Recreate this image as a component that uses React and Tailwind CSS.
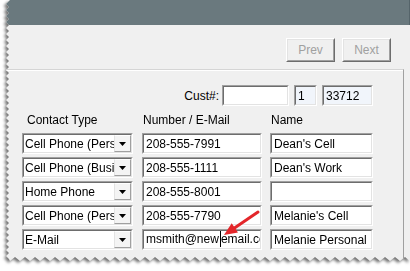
import React from "react";

function Inset({ w, bg = "bg-white", children }) {
  return (
    <div className={`${w} h-[21px] border border-t-[#a0a0a0] border-l-[#a0a0a0] border-b-white border-r-white`}>
      <div className={`h-full border border-t-[#6d6d6d] border-l-[#6d6d6d] border-b-[#e3e3e3] border-r-[#e3e3e3] ${bg} flex items-center overflow-hidden whitespace-nowrap`}>
        {children}
      </div>
    </div>
  );
}

function Combo({ text }) {
  return (
    <Inset w="w-[111px]">
      <div className="flex-1 pl-[1px] overflow-hidden whitespace-nowrap text-black">{text}</div>
      <div className="w-[17px] h-full shrink-0 border border-t-white border-l-[#e3e3e3] border-b-[#a0a0a0] border-r-[#a0a0a0] bg-[#f4f4f4] flex items-center justify-center">
        <svg width="7" height="4" viewBox="0 0 7 4">
          <polygon points="0,0 7,0 3.5,4" fill="#000" />
        </svg>
      </div>
    </Inset>
  );
}

function Field({ w, children, bg }) {
  return (
    <Inset w={w} bg={bg}>
      <div className="pl-[2px] text-black whitespace-nowrap">{children}</div>
    </Inset>
  );
}

function Btn({ label }) {
  return (
    <div className="w-[49px] h-[24px] border border-t-white border-l-white border-b-[#6d6d6d] border-r-[#6d6d6d]">
      <div className="h-full border border-t-[#e3e3e3] border-l-[#e3e3e3] border-b-[#a0a0a0] border-r-[#a0a0a0] flex items-center justify-center text-[#a0a0a0]">
        {label}
      </div>
    </div>
  );
}

const rows = [
  { type: "Cell Phone (Personal)", num: "208-555-7991", name: "Dean's Cell" },
  { type: "Cell Phone (Business)", num: "208-555-1111", name: "Dean's Work" },
  { type: "Home Phone", num: "208-555-8001", name: "" },
  { type: "Cell Phone (Personal)", num: "208-555-7790", name: "Melanie's Cell" },
  { type: "E-Mail", num: null, name: "Melanie Personal" },
];

export default function App() {
  const pts = ["10px 0px", "410px 0px", "410px 260px"];
  for (let x = 410, i = 0; x >= 8; x -= 5, i++) pts.push(`${x}px ${i % 2 ? 257 : 261}px`);
  for (let y = 259, i = 0; y >= 0; y -= 3, i++) pts.push(`${i % 2 ? 6 : 9}px ${y}px`);
  const clip = `polygon(${pts.join(",")})`;

  return (
    <div className="w-[410px] h-[271px] bg-white relative overflow-hidden font-['Liberation_Sans',Arial,sans-serif] text-[12px] leading-[14px]">
      <div className="drop-shadow-[-2px_2px_1.5px_rgba(0,0,0,0.55)]">
        <div className="h-[264px] bg-[#f0f0f0] flex flex-col" style={{ clipPath: clip }}>
          <div className="h-[25px] bg-[#6a797e] border-r border-[#55646a]" />
          <div className="flex justify-end gap-[7px] pt-[13px] pr-[19px]">
            <Btn label="Prev" />
            <Btn label="Next" />
          </div>
          <div className="flex-1 mt-[7px] mr-[6px] border-t border-r border-t-[#d5d5d5] border-r-[#a0a0a0] shadow-[inset_0_1px_0_#ffffff]">
            <div className="flex items-center h-[21px] mt-[15px] pl-[22px]">
              <div className="w-[200px] text-right pr-[3px] text-black">Cust#:</div>
              <Field w="w-[67px]" />
              <div className="ml-[5px]">
                <Field w="w-[23px]" bg="bg-[#f1f5fb]">1</Field>
              </div>
              <div className="ml-[5px]">
                <Field w="w-[51px]" bg="bg-[#f1f5fb]">33712</Field>
              </div>
            </div>
            <div className="flex mt-[7px] h-[15px] pl-[22px] text-black">
              <div className="w-[120px] pl-[5px]">Contact Type</div>
              <div className="w-[128px] pl-[1px]">Number / E-Mail</div>
              <div className="pl-[1px]">Name</div>
            </div>
            <div className="flex flex-col gap-[3px] mt-[5px] pl-[22px]">
              {rows.map((r, i) => (
                <div key={i} className="flex">
                  <Combo text={r.type} />
                  <div className="ml-[9px]">
                    {r.num ? (
                      <Field w="w-[120px]">{r.num}</Field>
                    ) : (
                      <Field w="w-[120px]">
                        msmith@new
                        <span className="inline-block w-0 h-[16px] border-l border-black align-middle ml-[1px] -mt-[2px]" />
                        email.com
                      </Field>
                    )}
                  </div>
                  <div className="ml-[8px]">
                    <Field w="w-[103px]">{r.name}</Field>
                  </div>
                </div>
              ))}
            </div>
          </div>
        </div>
      </div>
      <svg className="absolute left-0 top-0" width="410" height="271" viewBox="0 0 410 271">
        <line x1="258" y1="212" x2="233" y2="229" stroke="#e3262a" strokeWidth="3" strokeLinecap="round" />
        <polygon points="224,235 238,232.4 231.7,223.2" fill="#e3262a" />
      </svg>
    </div>
  );
}
